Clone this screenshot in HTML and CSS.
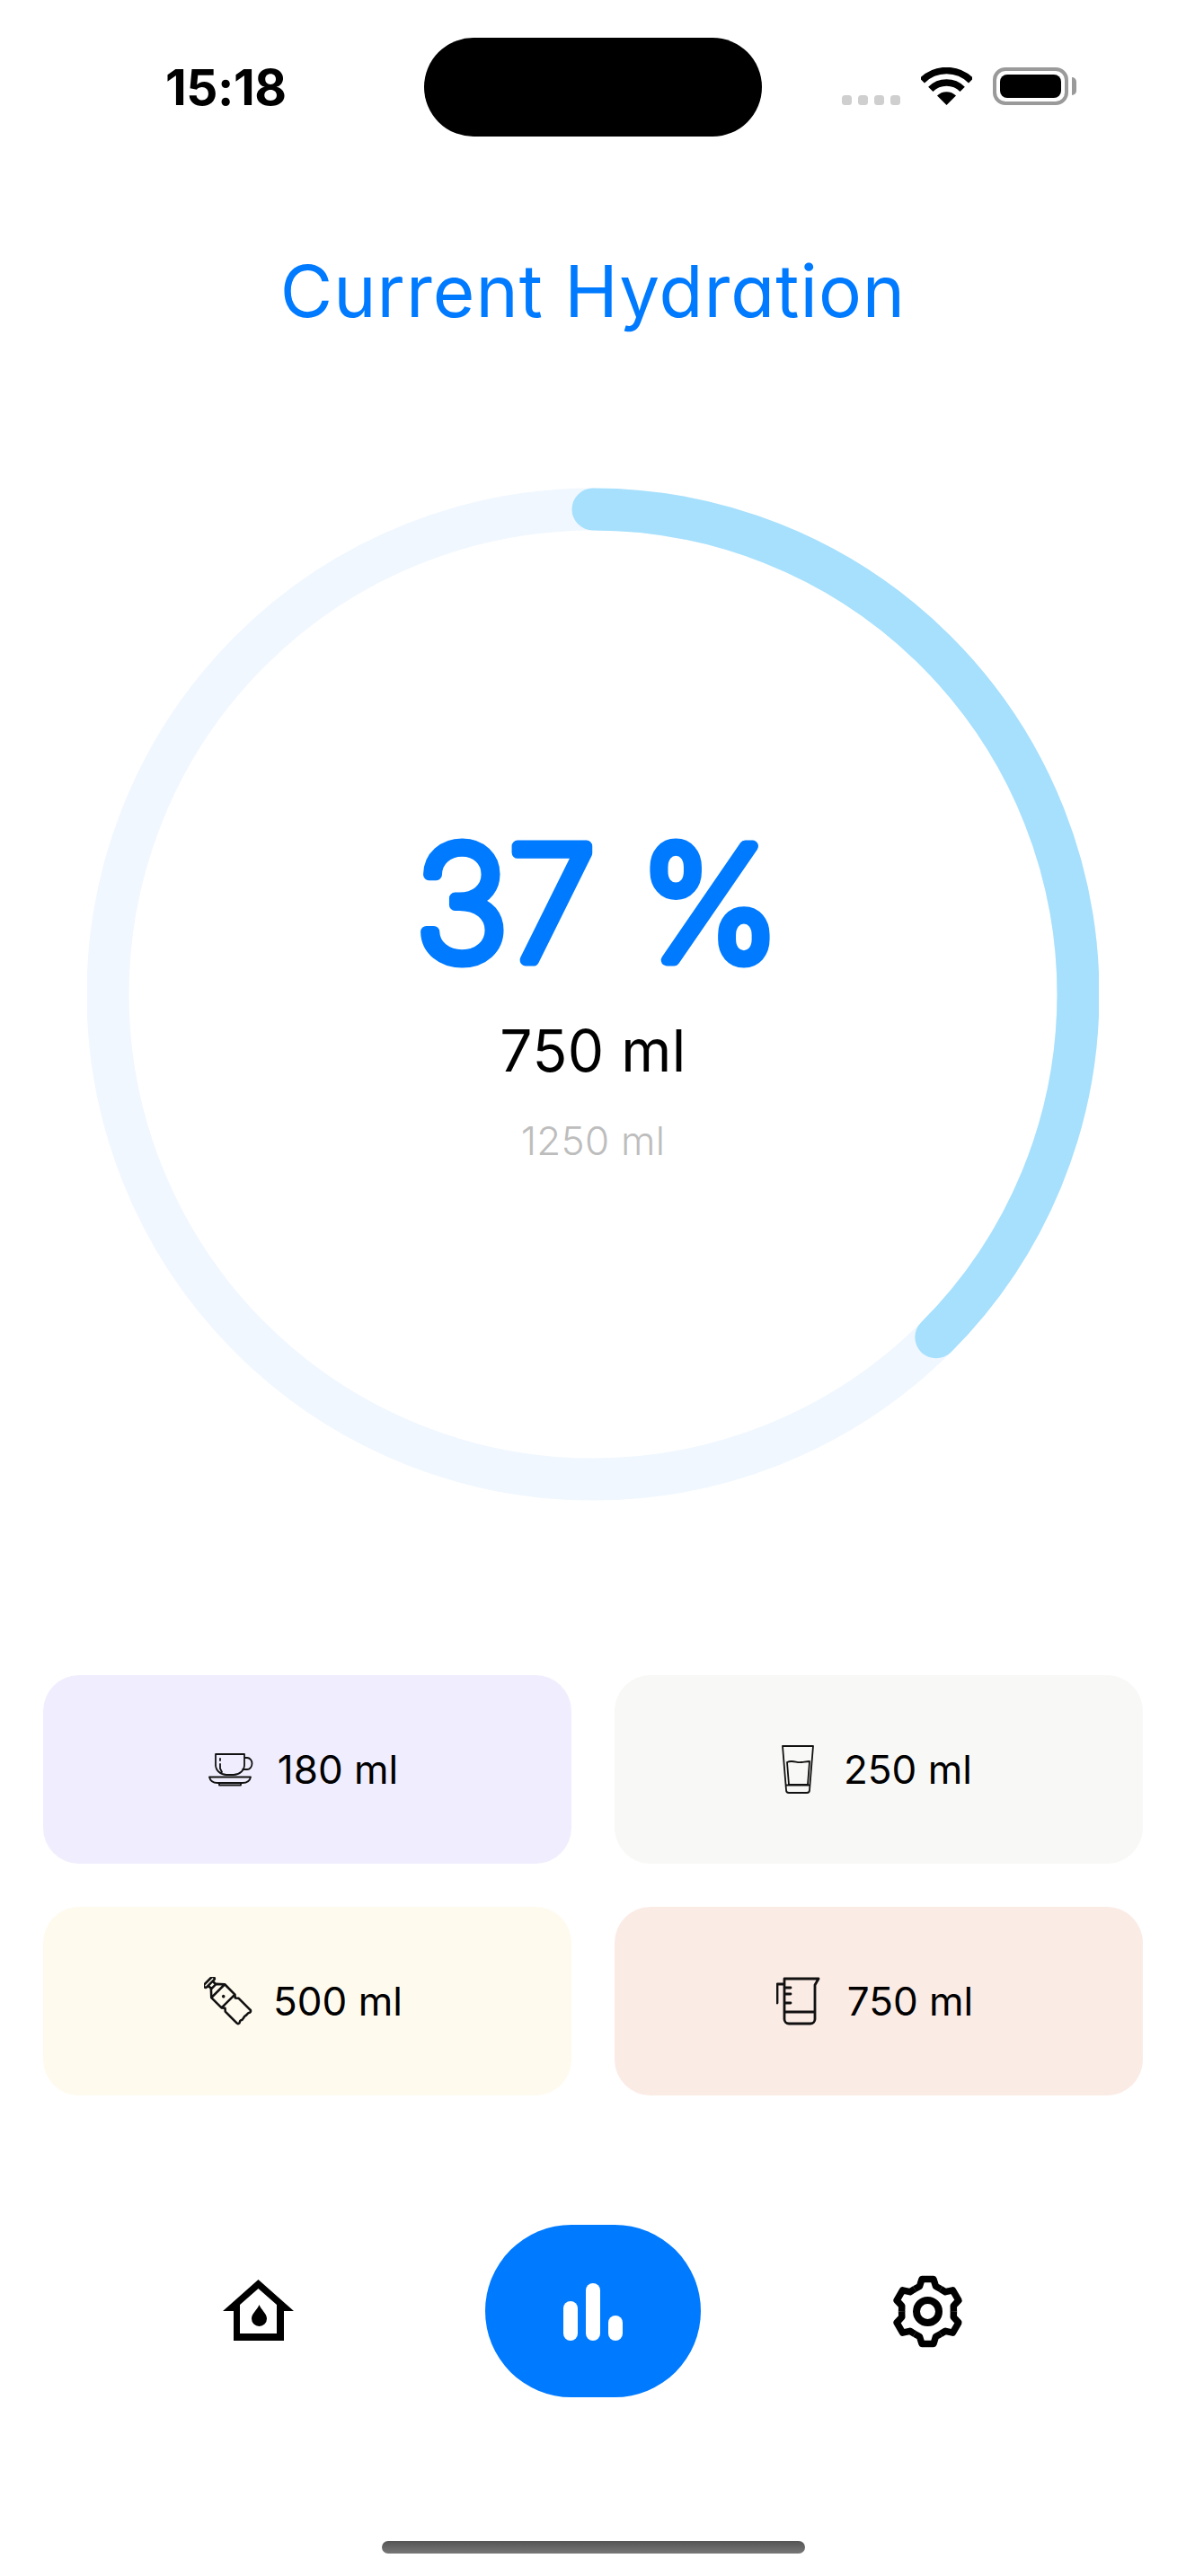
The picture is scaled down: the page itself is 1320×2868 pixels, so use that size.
FILE: index.html
```html
<!DOCTYPE html>
<html lang="en">
<head>
<meta charset="utf-8">
<title>Current Hydration</title>
<link rel="stylesheet" href="styles.css">
</head>
<body>
<main class="screen">
  <header class="status">
    <div class="time">15:18</div>
    <div class="island"></div>
    <div class="indicators">
      <div class="signal"><i></i><i></i><i></i><i></i></div>
      <svg class="wifi" viewBox="0 0 57 42"><path class="wifi-arc" d="M1.3 14.8A38.5 38.5 0 0 1 55.7 14.8M10.8 24.3A25 25 0 0 1 46.2 24.3"/><path d="M28.5 42 18 31.5A14.8 14.8 0 0 1 39 31.5Z"/></svg>
      <div class="battery"><div class="battery-fill"></div></div>
      <div class="battery-nub"></div>
    </div>
  </header>

  <h1 class="title">Current Hydration</h1>

  <section class="ring">
    <svg class="ring-svg" viewBox="0 0 1126 1128">
      <circle class="track" cx="563" cy="564" r="540"/>
      <circle class="progress" cx="563" cy="564" r="540" pathLength="100" stroke-dasharray="37.5 100" transform="rotate(-90 563 564)"/>
    </svg>
    <div class="readout">
      <svg class="percent" viewBox="0 0 600 230"><text x="305" y="171" text-anchor="middle">37 %</text></svg>
      <div class="current">750 ml</div>
      <div class="goal">1250 ml</div>
    </div>
  </section>

  <section class="cards">
    <button class="card card-violet">
      <svg class="ico ico-cup" viewBox="0 0 50 37"><path d="M8 1H40V13A12 11 0 0 1 28 24H20A12 11 0 0 1 8 13ZM40 5H43A5.500 6.500 0 0 1 43 18H38M13 6V8M13 12V17L15 21M1 26.500H47C46 31 42 33 38 33H10C6 33 2 31 1 26.500ZM12 33V35.500H36V33"/></svg>
      <span>180 ml</span>
    </button>
    <button class="card card-grey">
      <svg class="ico ico-glass" viewBox="0 0 36 54"><path d="M1 1H35L31 50A3 3 0 0 1 28 53H8A3 3 0 0 1 5 50ZM6 19C12 16 17 20 22 19 26 18.500 28 18 31 18L29 44H8ZM5 44.500H31"/></svg>
      <span>250 ml</span>
    </button>
    <button class="card card-cream">
      <svg class="ico ico-bottle" viewBox="0 0 54 54"><g transform="translate(27 27) rotate(-45)"><path d="M-5.500 -32H5.500A2 2 0 0 1 5.500 -28H-5.500A2 2 0 0 1 -5.500 -32ZM-3.500 -28V-23M3.500 -28V-23M-10.500 -16-4 -23H4L10.500 -16V0L8 3 10.500 6V24A2 2 0 0 1 8 26C6 24 4 26 2 25 0 24-3 27-5 25-7 24-8 27-9 26A2 2 0 0 1 -10.500 24V6L-8 3-10.500 0ZM-10.500 -16H10.500M-10.500 0H10.500"/><circle class="dot" cx="0" cy="-7.500" r="1.800"/></g></svg>
      <span>500 ml</span>
    </button>
    <button class="card card-peach">
      <svg class="ico ico-beaker" viewBox="0 0 49 54"><path d="M9 2H47L43 9V47A5 5 0 0 1 38 52H14A5 5 0 0 1 9 47ZM9 8H1V29M9 12H16M9 19H16M9 29H16M9 39H43"/></svg>
      <span>750 ml</span>
    </button>
  </section>

  <nav class="tabs">
    <svg class="tab-home" viewBox="0 0 79 68"><path fill-rule="evenodd" d="M39.500 0 79 35H68V68H12V35H0ZM39.500 10 19 28V60H60V28Z"/><path d="M40.500 28C43 34 49 38 49 43.500A8.500 8.500 0 0 1 32 43.500C32 38 38 34 40.500 28Z"/></svg>
    <div class="tab-active">
      <i class="bar bar-a"></i><i class="bar bar-b"></i><i class="bar bar-c"></i>
    </div>
    <svg class="tab-gear" viewBox="-39.500 -39.500 79 79">
      <g id="s"><path d="M-14.500-25-9-28-6.500-36H6.500L9-28 14.500-25"/></g>
      <use href="#s" transform="rotate(60)"/><use href="#s" transform="rotate(120)"/><use href="#s" transform="rotate(180)"/><use href="#s" transform="rotate(240)"/><use href="#s" transform="rotate(300)"/>
      <circle class="hub" r="12.500"/>
    </svg>
  </nav>

  <div class="home-bar"></div>
</main>
</body>
</html>
```

FILE: styles.css
```css
* { box-sizing: border-box; }
html, body { margin: 0; padding: 0; background: #fff; }
.screen {
  width: 1320px;
  height: 2868px;
  overflow: hidden;
  font-family: Inter, "Liberation Sans", sans-serif;
  font-feature-settings: "cv11" 1;
  color: #000;
  display: flex;
  flex-direction: column;
  align-items: center;
}
.status {
  width: 100%;
  height: 152px;
  padding: 42px 122px 0 184px;
  display: flex;
  justify-content: space-between;
  align-items: flex-start;
}
.time {
  width: 135px;
  margin-top: 25px;
  font-family: Inter, sans-serif;
  font-weight: 650;
  font-size: 55px;
  line-height: 60px;
  letter-spacing: -0.4px;
}
.island {
  width: 376px;
  height: 110px;
  margin-left: 153px;
  border-radius: 55px;
  background: #000;
}
.indicators {
  width: 261px;
  height: 42px;
  margin-top: 33px;
  margin-left: 89px;
  display: flex;
  align-items: flex-end;
}
.signal { display: flex; gap: 7px; margin-bottom: 0; }
.signal i { width: 11px; height: 11px; border-radius: 3.5px; background: #cfcfcf; }
.wifi { width: 57px; height: 42px; margin-left: 23px; }
.wifi-arc { fill: none; stroke: #000; stroke-width: 7.500; }
.battery {
  width: 84px;
  height: 42px;
  margin-left: 23px;
  padding: 4px;
  border: 4px solid #9a9a9a;
  border-radius: 14px;
}
.battery-fill { width: 100%; height: 100%; border-radius: 8px; background: #000; }
.battery-nub {
  width: 5px;
  height: 20px;
  margin-left: 4px;
  margin-bottom: 11px;
  border-radius: 0 5px 5px 0;
  background: #9a9a9a;
}
.title {
  margin: 122px 0 0;
  font-size: 80px;
  line-height: 100px;
  font-weight: 400;
  color: #007aff;
  text-align: center;
  letter-spacing: 1px;
}
.ring {
  width: 1126px;
  height: 1128px;
  margin-top: 169px;
  display: grid;
}
.ring-svg, .readout { grid-area: 1 / 1; }
.ring-svg { width: 1126px; height: 1128px; }
.track, .progress { fill: none; stroke-width: 47; }
.track { stroke: #f0f7ff; }
.progress { stroke: #a6e0fd; stroke-linecap: round; }
.readout {
  display: flex;
  flex-direction: column;
  align-items: center;
  padding-top: 355px;
}
.percent { width: 600px; height: 230px; }
.percent text {
  font-family: Inter, sans-serif;
  font-size: 175px;
  font-weight: 200;
  fill: #007aff;
  stroke: #007aff;
  stroke-width: 13px;
  stroke-linejoin: round;
  stroke-linecap: round;
}
.current { margin-top: 2px; font-size: 64px; line-height: 80px; font-weight: 400; letter-spacing: 0.5px; }
.goal { margin-top: 32px; font-size: 44px; line-height: 56px; font-weight: 300; color: #bdbdbd; letter-spacing: 0.3px; }
.cards {
  width: 1224px;
  margin-top: 194px;
  display: grid;
  grid-template-columns: 588px 588px;
  gap: 48px;
}
.card {
  height: 210px;
  border: 0;
  border-radius: 40px;
  padding: 0 9px 0 0;
  display: flex;
  align-items: center;
  justify-content: center;
  font: inherit;
  font-size: 44px;
  line-height: 56px;
  color: #000;
}
.card-violet { background: #f0eefe; gap: 27px; }
.card-grey { background: #f8f8f6; gap: 33px; padding-right: 4px; }
.card-cream { background: #fffaee; gap: 23px; }
.card-peach { background: #fbebe5; gap: 30px; }
.ico { fill: none; stroke: #111; stroke-linejoin: round; stroke-linecap: round; }
.ico-cup { width: 50px; height: 37px; stroke-width: 1.800; }
.ico-glass { width: 36px; height: 54px; stroke-width: 1.800; }
.ico-bottle { width: 54px; height: 54px; stroke-width: 2.600; }
.ico-beaker { width: 49px; height: 54px; stroke-width: 2.800; }
.dot { fill: #111; stroke: none; }
.tabs {
  width: 824px;
  margin-top: 144px;
  display: flex;
  align-items: center;
  justify-content: space-between;
}
.tab-home { width: 79px; height: 68px; margin-bottom: 2px; }
.tab-gear { width: 79px; height: 79px; fill: none; stroke: #000; stroke-width: 7.500; stroke-linejoin: round; overflow: visible; }
.hub { stroke-width: 8; }
.tab-active {
  width: 240px;
  height: 192px;
  border-radius: 96px;
  background: #007aff;
  display: flex;
  align-items: flex-end;
  justify-content: center;
  gap: 9px;
  padding-bottom: 63px;
}
.bar { display: block; width: 16px; border-radius: 8px; background: #fff; }
.bar-a { height: 44px; }
.bar-b { height: 64px; }
.bar-c { height: 28px; }
.home-bar {
  width: 471px;
  height: 14px;
  margin-top: 160px;
  border-radius: 7px;
  background: linear-gradient(#555, #777);
}
```
